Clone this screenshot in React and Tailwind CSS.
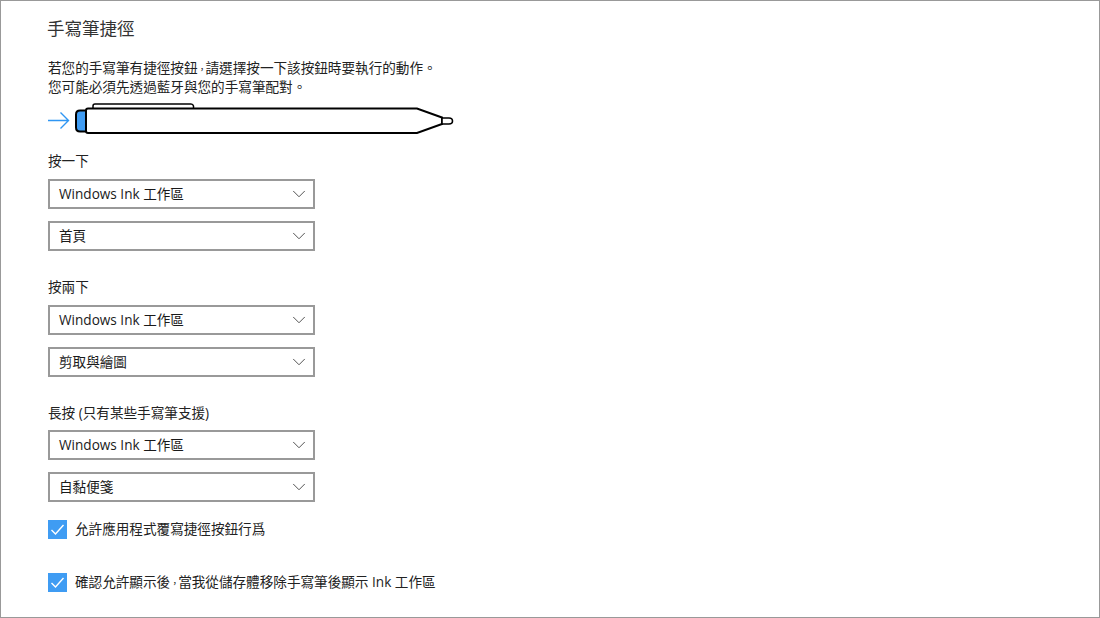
import { ChevronDown } from 'lucide-react'

const font = "font-['Segoe_UI','Open_Sans','Noto_Sans_CJK_TC',sans-serif]"

// the reference sets the fullwidth comma narrow
const Comma = () => <span className="inline-block w-[8px] text-[9px] leading-none">，</span>

const PenIcon = () => (
  <svg width="410" height="36" viewBox="0 0 410 36" fill="none" className="block">
    {/* arrow */}
    <path d="M0 18.500H20M12.500 10.500L20.500 18.500L12.500 26.500" stroke="#2f96f3" strokeWidth="1.400" />
    {/* clip */}
    <path d="M45 7V4Q45 2 47 2H143Q145 2 145.500 4V7" stroke="#000" strokeWidth="1.500" fill="#fff" />
    {/* blue cap */}
    <path d="M38 8.500H32Q28 8.500 28 12.500V25.500Q28 29.500 32 29.500H38Z" fill="#3f9cf3" stroke="#000" strokeWidth="2" />
    {/* body */}
    <path d="M40 6.500H369L394 15.500V22L369 31H40Q38 31 38 29V8.500Q38 6.500 40 6.500Z" fill="#fff" stroke="#000" strokeWidth="2" />
    {/* nib */}
    <path d="M394 16H401Q404.500 16 404.500 19Q404.500 22 401 22H394Z" fill="#fff" stroke="#000" strokeWidth="1.600" />
  </svg>
)

const Dropdown = ({ label }) => (
  <div className="flex h-[30px] w-[267px] items-center justify-between border-2 border-[#999999] bg-white pl-[9px] pr-[3px] text-[13.600px] text-[#1a1a1a]">
    <span>{label}</span>
    <ChevronDown size={22} strokeWidth={1} className="text-[#444]" />
  </div>
)

const Group = ({ title, first, second, className, inner }) => (
  <div className={className}>
    <div className="h-[20px] text-[13.600px] leading-[20px] text-[#222]">{title}</div>
    <div className={`flex flex-col gap-[12px] ${inner}`}>
      <Dropdown label={first} />
      <Dropdown label={second} />
    </div>
  </div>
)

const Check = ({ children, className }) => (
  <div className={`flex h-[20px] items-center gap-[8px] ${className}`}>
    <div className="flex h-[19px] w-[19px] items-center justify-center bg-[#3f9cf3]">
      <svg width="15" height="15" viewBox="0 0 15 15" fill="none">
        <path d="M1.500 8L5.500 12L13.500 3" stroke="#fff" strokeWidth="1.400" />
      </svg>
    </div>
    <span className="text-[13.600px] leading-[20px] text-[#222]">{children}</span>
  </div>
)

export default function App() {
  return (
    <div className={`h-[618px] w-[1100px] overflow-hidden border border-[#999999] bg-white pl-[46px] ${font}`}>
      <h1 className="mt-[13px] h-[28px] text-[17.500px] font-normal leading-[28px] text-[#333]">手寫筆捷徑</h1>
      <p className="mt-[16px] pl-px text-[13.600px] leading-[19px] text-[#222]">
        若您的手寫筆有捷徑按鈕<Comma />請選擇按一下該按鈕時要執行的動作。
        <br />
        您可能必須先透過藍牙與您的手寫筆配對。
      </p>
      <div className="ml-px mt-[6px]">
        <PenIcon />
      </div>
      <Group className="ml-px mt-[13px]" inner="mt-[8px]" title="按一下" first="Windows Ink 工作區" second="首頁" />
      <Group className="ml-px mt-[26px]" inner="mt-[8px]" title="按兩下" first="Windows Ink 工作區" second="剪取與繪圖" />
      <Group className="ml-px mt-[26px]" inner="mt-[7px]" title="長按 (只有某些手寫筆支援)" first="Windows Ink 工作區" second="自黏便箋" />
      <Check className="ml-px mt-[17px]">允許應用程式覆寫捷徑按鈕行爲</Check>
      <Check className="ml-px mt-[33px]">確認允許顯示後<Comma />當我從儲存體移除手寫筆後顯示 Ink 工作區</Check>
    </div>
  )
}
